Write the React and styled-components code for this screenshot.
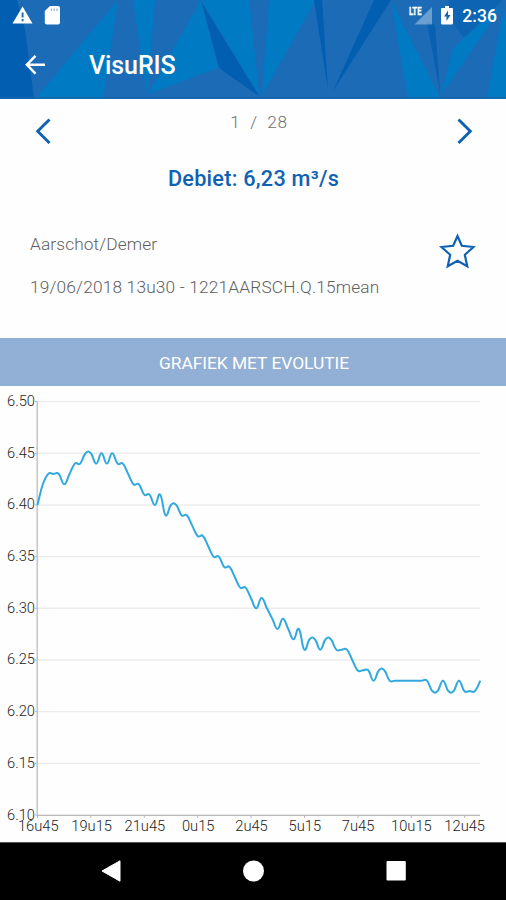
import React from "react";
import styled, { createGlobalStyle } from "styled-components";

const GlobalStyle = createGlobalStyle`
  * { box-sizing: border-box; }
  body { margin: 0; background: #fff; font-family: Roboto, sans-serif; }
`;

const BLUE = "#0f62b2";

const Screen = styled.main`
  display: flex;
  flex-direction: column;
  width: 506px;
  height: 900px;
  overflow: hidden;
  background: #fefefe;
`;

const Header = styled.header`
  position: relative;
  display: flex;
  flex-direction: column;
  height: 98.5px;
  flex: none;
  color: #fff;
  background: #1b6bb7;
  overflow: hidden;
`;

const Facets = styled.svg`
  position: absolute;
  inset: 0;
`;

const StatusBar = styled.div`
  position: relative;
  display: flex;
  justify-content: space-between;
  height: 32px;
  padding: 0 9px 0 12px;
`;

const StatusGroup = styled.div`
  display: flex;
  align-items: flex-start;
`;

const Clock = styled.span`
  margin-left: 9px;
  padding-top: 6px;
  font-size: 17.5px;
  line-height: 21px;
  font-weight: 500;
  letter-spacing: 0.1px;
`;

const Toolbar = styled.div`
  position: relative;
  display: flex;
  align-items: center;
  height: 66px;
  padding-left: 25px;
`;

const Title = styled.h1`
  margin: 2px 0 0 44px;
  font-size: 25px;
  line-height: 30px;
  font-weight: 500;
  letter-spacing: -0.1px;
`;

const Pager = styled.nav`
  display: grid;
  grid-template-columns: 17px 1fr 17px;
  height: 60px;
  flex: none;
  padding: 19px 33px 0 35px;
`;

const IconButton = styled.button`
  display: block;
  height: max-content;
  padding: 0;
  border: 0;
  background: none;
  svg { display: block; }
`;

const PageCount = styled.span`
  padding-left: 10px;
  margin-top: -6px;
  color: #707070;
  font-size: 17.3px;
  line-height: 20px;
  font-weight: 300;
  letter-spacing: 0.6px;
  text-align: center;
  white-space: pre;
`;

const Reading = styled.h2`
  flex: none;
  height: 74px;
  margin: 0;
  padding: 7px 0 0 1px;
  color: ${BLUE};
  font-size: 21.7px;
  line-height: 26px;
  font-weight: 500;
  letter-spacing: 0.23px;
  text-align: center;
`;

const Station = styled.section`
  display: flex;
  justify-content: space-between;
  flex: none;
  height: 105.5px;
  padding: 0 30px;
`;

const Details = styled.div`
  display: flex;
  flex-direction: column;
  gap: 23px;
  padding-top: 1px;
  color: #606060;
  font-weight: 300;
  font-size: 17.3px;
  line-height: 20px;
`;

const DetailLine = styled.span`
  letter-spacing: ${(p) => p.$tracking}px;
`;

const Banner = styled.button`
  flex: none;
  height: 48px;
  padding: 2px 2px 0 4px;
  border: 0;
  color: #fff;
  background: #92b0d5;
  font-family: inherit;
  font-size: 17.4px;
  line-height: 22px;
  letter-spacing: -0.04px;
`;

const Chart = styled.svg`
  display: block;
  flex: none;
`;

const AxisText = styled.text`
  fill: #1c1c1c;
  font-family: Roboto, sans-serif;
  font-weight: 300;
  font-size: 14.7px;
  text-anchor: ${(p) => p.$anchor};
`;

const NavBar = styled.footer`
  display: flex;
  align-items: center;
  justify-content: space-between;
  flex: 1;
  padding: 0 100px 1px 101px;
  background: #000;
  border-top: 1px solid #555;
`;

const LIGHT = "#007ac3";
const BASE = "#1b6bb7";
const DARK = "#025eb0";
const facets = [
  [DARK, "0,0 17,0 25,30 34,99 0,99"],
  [LIGHT, "118,0 35,99 103,99"],
  [LIGHT, "133,0 155,0 147,95"],
  [LIGHT, "201,0 148,94 218,68"],
  [LIGHT, "201,0 250,0 259,95"],
  [DARK, "202,3 219,68 259,96"],
  [BASE, "249,0 269,0 260,95"],
  [LIGHT, "269,0 316,0 262,95"],
  [DARK, "314,0 322,0 328,90"],
  [DARK, "374,0 391,0 333,91"],
  [LIGHT, "391,0 408,99 441,99"],
  ["#0860b0", "427,22 435,25 440,93"],
  ["#0c64b3", "448,0 503,0 464,38 452,22"],
  [LIGHT, "441,95 453,48 464,38 504,3"],
  [LIGHT, "487,99 501,20 506,10 506,99"],
];

const levels = [
  40, 42, 43, 43, 43, 42, 43, 44, 44, 45, 45, 44, 45, 44, 45, 44, 44, 43, 42,
  42, 41, 41, 40, 41, 39, 40, 40, 39, 39, 38, 37, 37, 36, 35, 35, 34, 34, 33,
  32, 32, 31, 30, 31, 30, 29, 28, 29, 28, 27, 28, 26, 27, 27, 26, 27, 27, 26,
  26, 26, 25, 24, 24, 24, 23, 24, 24, 23, 23, 23, 23, 23, 23, 23, 23, 22, 22,
  23, 22, 22, 23, 22, 22, 22, 23,
];
const CHART_TOP = 386;
const X0 = 37.5;
const STEP = 442.8 / 83;
const yOf = (v) => 815 - CHART_TOP - (v - 10) * 10.335;

function smoothPath(values) {
  const pts = values.map((v, i) => [X0 + i * STEP, yOf(v)]);
  const at = (i) => pts[Math.max(0, Math.min(pts.length - 1, i))];
  const k = 0.22;
  let d = `M${pts[0]}`;
  for (let i = 1; i < pts.length; i++) {
    const [p, c, pp, n] = [at(i - 1), at(i), at(i - 2), at(i + 1)];
    d += `C${p[0] + (c[0] - pp[0]) * k},${p[1] + (c[1] - pp[1]) * k} ${
      c[0] - (n[0] - p[0]) * k},${c[1] - (n[1] - p[1]) * k} ${c}`;
  }
  return d;
}

const yTicks = [50, 45, 40, 35, 30, 25, 20, 15, 10];
const xTicks = ["16u45", "19u15", "21u45", "0u15", "2u45", "5u15", "7u45", "10u15", "12u45"];

function EvolutionChart() {
  return (
    <Chart width="506" height="456" viewBox="0 0 506 456">
      {yTicks.slice(0, -1).map((t) => (
        <path key={t} d={`M37 ${yOf(t)}H480`} stroke="#ececec" strokeWidth="1.4" />
      ))}
      <path d={`M37.2 ${yOf(50)}V429.3H480`} fill="none" stroke="#b8b8b8" strokeWidth="1.2" />
      {yTicks.map((t) => (
        <React.Fragment key={t}>
          <path d={`M35 ${yOf(t)}H37`} stroke="#b8b8b8" />
          <AxisText $anchor="end" x="35" y={yOf(t) + 4.5}>{`6.${t}`}</AxisText>
        </React.Fragment>
      ))}
      {xTicks.map((t, i) => (
        <React.Fragment key={t}>
          <path d={`M${X0 + i * 53.4} 429v3`} stroke="#b8b8b8" />
          <AxisText $anchor="middle" x={38.3 + i * 53.3} y="444.5">{t}</AxisText>
        </React.Fragment>
      ))}
      <path d={smoothPath(levels)} fill="none" stroke="#31a9de" strokeWidth="2" />
    </Chart>
  );
}

export default function App() {
  return (
    <Screen>
      <GlobalStyle />
      <Header>
        <Facets width="506" height="99" viewBox="0 0 506 99">
          {facets.map(([fill, points]) => (
            <polygon key={points} fill={fill} points={points} />
          ))}
          <path d="M0 97.7H506" stroke="#1666aa" strokeWidth="1.5" />
        </Facets>
        <StatusBar>
          <StatusGroup>
            <svg width="60" height="32" viewBox="12 0 60 32">
              <path d="M22.6 6.5 32.5 23.4h-20z" fill="#fff" />
              <path d="M22.6 12.5v5M22.6 19v2.2" stroke="#1b6bb7" strokeWidth="1.9" />
              <path d="M50 6h8q2 0 2 2v14.5q0 2-2 2H46.800q-2 0-2-2V11z" fill="#fff" />
              <path d="M51.500 8.500v2.500M54.200 8.500v2.500M57 8.500v2.500" stroke="#8ab4dc" strokeWidth="1.2" />
            </svg>
          </StatusGroup>
          <StatusGroup>
            <svg width="46" height="32" viewBox="408 0 46 32">
              <text x="410" y="14.5" fill="#fff" stroke="#fff" strokeWidth=".3" fontFamily="Roboto" fontSize="10.5" fontWeight="700" textLength="12.500" lengthAdjust="spacingAndGlyphs">LTE</text>
              <path d="M433 7v17.500H415.500z" fill="#fff" opacity=".35" />
              <path d="M446 6h4v2h3q1 0 1 1v14q0 1.500-1.500 1.500h-9q-1.500 0-1.500-1.500V9q0-1 1-1h3z" fill="#fff" />
              <path d="M449 10.500l-4 6h2.500v4.500l4-6h-2.500z" fill="#1764b3" />
            </svg>
            <Clock>2:36</Clock>
          </StatusGroup>
        </StatusBar>
        <Toolbar>
          <IconButton aria-label="Terug">
            <svg width="20" height="20" viewBox="0 0 20 20" fill="none" stroke="#fff" strokeWidth="2.400">
              <path d="M10.500 .8 1.800 9.700l8.700 8.900M2 9.700h18" />
            </svg>
          </IconButton>
          <Title>VisuRIS</Title>
        </Toolbar>
      </Header>
      <Pager>
        <IconButton aria-label="Vorige">
          <svg width="17" height="26" viewBox="0 0 17 26" fill="none" stroke={BLUE} strokeWidth="2.900">
            <path d="M14.500 1.500 2.700 13.200 14.500 25" />
          </svg>
        </IconButton>
        <PageCount>{"1  /  28"}</PageCount>
        <IconButton aria-label="Volgende">
          <svg width="17" height="26" viewBox="0 0 17 26" fill="none" stroke={BLUE} strokeWidth="2.900">
            <path d="M2.500 1.500 14.300 13.200 2.500 25" />
          </svg>
        </IconButton>
      </Pager>
      <Reading>Debiet: 6,23 m³/s</Reading>
      <Station>
        <Details>
          <DetailLine $tracking={0.12}>Aarschot/Demer</DetailLine>
          <DetailLine $tracking={0.18}>19/06/2018 13u30 - 1221AARSCH.Q.15mean</DetailLine>
        </Details>
        <IconButton aria-label="Favoriet">
          <svg width="38" height="38" viewBox="438 233.5 38 38" fill="none" stroke={BLUE} strokeWidth="2.200">
            <path d="M457.500 236.500 461.800 246.300 473.500 247.500 464.800 255.300 467.300 266.800 457.500 261.200 447.700 266.800 450.200 255.300 441.500 247.500 453.200 246.300z" />
          </svg>
        </IconButton>
      </Station>
      <Banner>GRAFIEK MET EVOLUTIE</Banner>
      <EvolutionChart />
      <NavBar>
        <svg width="20" height="22" viewBox="0 0 20 22"><path d="M1 11 19 .8v20.400z" fill="#fff" stroke="#fff" strokeLinejoin="round" /></svg>
        <svg width="22" height="22" viewBox="0 0 22 22"><circle cx="10.5" cy="11" r="10.500" fill="#fff" /></svg>
        <svg width="20" height="20" viewBox="0 0 20 20"><rect x=".5" width="19.3" height="19.5" rx="1" fill="#fff" /></svg>
      </NavBar>
    </Screen>
  );
}
